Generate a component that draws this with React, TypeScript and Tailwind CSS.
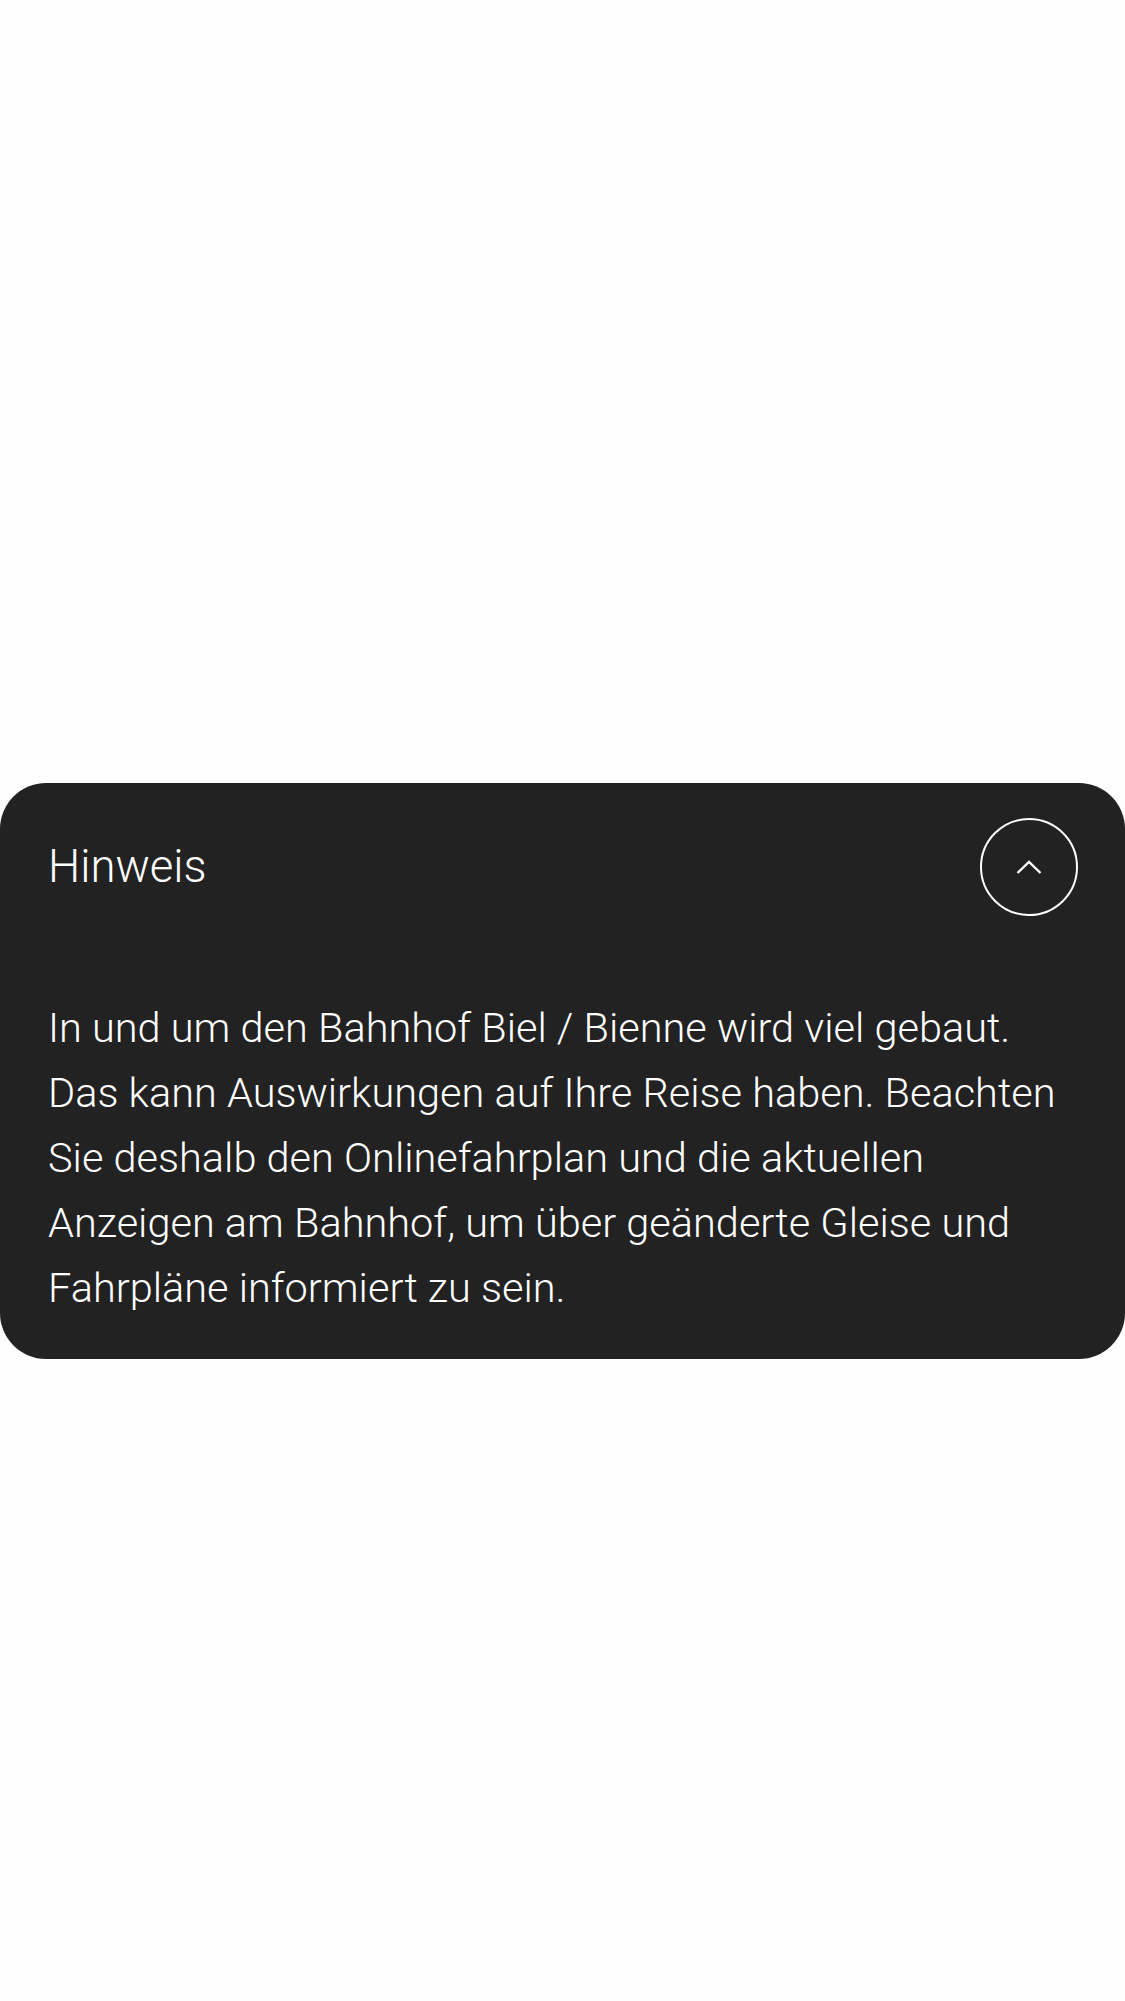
import React from 'react';

export default function App() {
  return (
    <div
      className="min-h-[2001px] w-full bg-[#fefefe] pt-[783px]"
      style={{ fontFamily: 'Roboto, "Liberation Sans", Arial, sans-serif' }}
    >
      {/* Notice card */}
      <section className="rounded-[46px] bg-[#222222] pt-[35px] pb-[39px] pl-[48px] pr-[47px] text-white">
        <div className="flex items-center justify-between">
          <h2 className="text-[45.5px] font-light leading-none">Hinweis</h2>
          <button
            type="button"
            aria-label="Zuklappen"
            className="flex h-[98px] w-[98px] items-center justify-center rounded-full border-2 border-white"
          >
            <svg width="26" height="14" viewBox="0 0 26 14" fill="none">
              <path d="M1.5 13 L13 2 L24.5 13" stroke="white" strokeWidth="2.4" />
            </svg>
          </button>
        </div>
        <p className="mt-[79px] text-[41.5px] font-light leading-[65px]">
          In und um den Bahnhof Biel / Bienne wird viel gebaut.
          <br />
          Das kann Auswirkungen auf Ihre Reise haben. Beachten
          <br />
          Sie deshalb den Onlinefahrplan und die aktuellen
          <br />
          Anzeigen am Bahnhof, um über geänderte Gleise und
          <br />
          Fahrpläne informiert zu sein.
        </p>
      </section>
    </div>
  );
}
